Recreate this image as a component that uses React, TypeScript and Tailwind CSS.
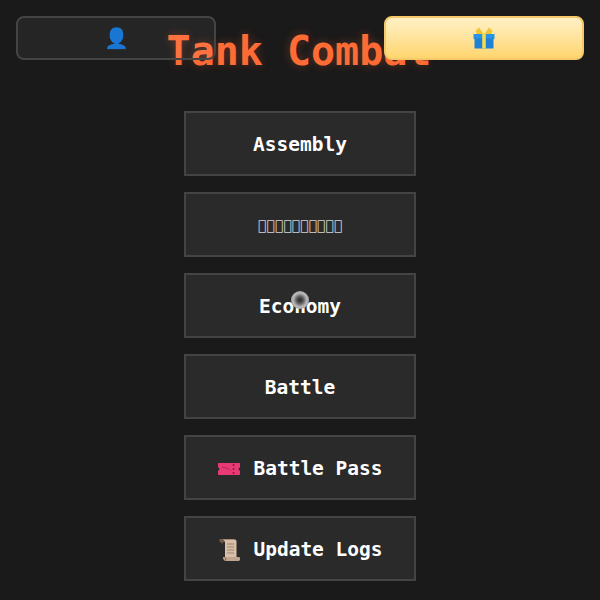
const GiftIcon = () => (
    <svg viewBox="0 0 24 24" className="h-6 w-6">
        <path d="M12 8.500L7 1.500 3.500 5 5 8.500zM12 8.500l5-7L20.500 5 19 8.500z" fill="#f0c62e" />
        <rect x="1.500" y="8" width="21" height="5" fill="#2b93e6" />
        <rect x="2.500" y="12.500" width="19" height="10" fill="#1f80d4" />
        <rect x="10.250" y="7" width="3.500" height="15.500" fill="#f7dc4f" />
    </svg>
)

const TicketIcon = () => (
    <svg viewBox="0 0 24 14" className="h-[14px] w-6">
        <path d="M1.500 1h21l.5.5v4a1.500 1.500 0 0 0 0 3v4l-.5.5h-21l-.5-.5v-4a1.500 1.500 0 0 0 0-3v-4z" fill="#ea3a76" />
        <path d="M5 5l6 1.500 2 2" stroke="#b3245a" strokeWidth="1" fill="none" />
        <path d="M16.500 2v2M16.500 6v2M16.500 10v2" stroke="#8a1a42" strokeWidth="1.500" />
    </svg>
)

const ScrollIcon = () => (
    <svg viewBox="0 0 24 24" className="h-6 w-6">
        <path d="M2 3c0-1.500 1-2 2-2h13v3H6L5.500 6z" fill="#6f5a4c" />
        <path d="M5 1.500h13c1 0 1.500 1 1.500 2V19H8V4.500C8 3 7 1.500 5 1.500z" fill="#d9bfa8" />
        <path d="M10 6h7M10 9h7M10 12h7M10 15h7" stroke="#9a8373" strokeWidth="1" />
        <path d="M6 19h16c1 0 1 1 1 2s-.5 2-1.500 2H9c-2 0-3-1.500-3-4z" fill="#bfa48f" />
        <path d="M8 19.500c1 .7 1 2 .5 3" stroke="#6f5a4c" strokeWidth="1" fill="none" />
    </svg>
)

const menuItems = [
    { label: "Assembly" },
    { label: "\u{F0000}\u{F0001}\u{F0002}\u{F0003}\u{F0004}\u{F0005}\u{F0006}\u{F0007}\u{F0008}\u{F0009}", missing: true },
    { label: "Economy" },
    { label: "Battle" },
    { label: "Battle Pass", icon: <TicketIcon /> },
    { label: "Update Logs", icon: <ScrollIcon /> },
]

export default function App() {
    return (
        <div className="relative flex h-[600px] w-[600px] flex-col items-center overflow-hidden bg-[#1a1a1a] font-['DejaVu_Sans_Mono',monospace]">
            <h1 className="mt-[28px] mb-[37px] -translate-x-px text-[40px] leading-[46px] font-bold text-[#ff6b35] [text-shadow:0_0_10px_rgba(255,107,53,0.3)]">
                Tank Combat
            </h1>

            <button className="absolute top-4 left-4 flex h-11 w-[200px] items-center justify-center rounded-lg border-2 border-[#444] bg-white/5 text-xl">
                👤
            </button>
            <button className="absolute top-4 right-4 flex h-11 w-[200px] items-center justify-center rounded-lg border-2 border-[#f5c869] bg-gradient-to-b from-[#fff0c4] to-[#ffd66e]">
                <GiftIcon />
            </button>

            <div className="flex flex-col gap-4">
                {menuItems.map((item) => (
                    <button
                        key={item.label}
                        className={`flex h-[65px] w-[232px] items-center justify-center gap-3 border-2 border-[#444] bg-[#2a2a2a] pt-[2px] text-white ${
                            item.missing ? "text-[14px]" : "text-[19.5px] font-bold"
                        }`}
                    >
                        {item.icon}
                        <span className={item.missing ? "opacity-80" : ""}>{item.label}</span>
                    </button>
                ))}
            </div>

            {/* pointer spot */}
            <div className="absolute top-[291px] left-[291px] h-[18px] w-[18px] rounded-full bg-[radial-gradient(circle,#2a2a2a_0%,#555_25%,#bbb_55%,#999_75%,rgba(150,150,150,0)_100%)]" />
        </div>
    )
}
